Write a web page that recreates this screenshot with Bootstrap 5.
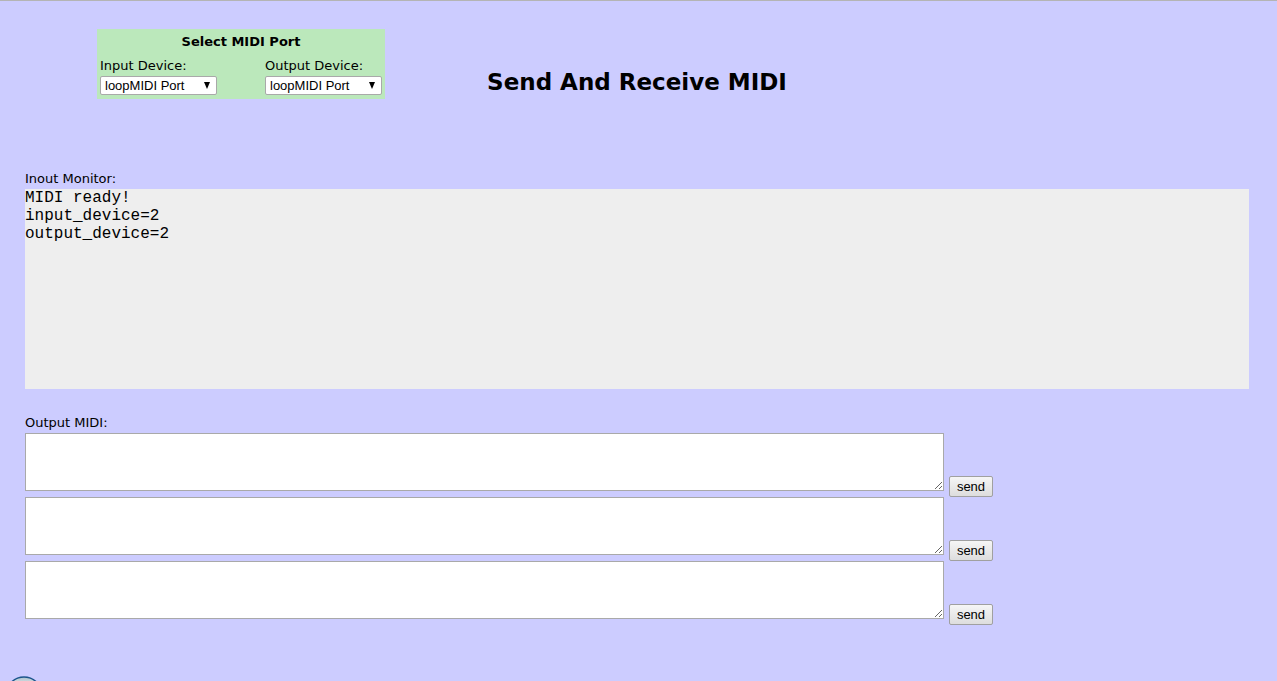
<!DOCTYPE html>
<html lang="en">
<head>
<meta charset="utf-8">
<meta name="viewport" content="width=device-width, initial-scale=1">
<title>Send And Receive MIDI</title>
<link href="https://cdn.jsdelivr.net/npm/bootstrap@5.3.0/dist/css/bootstrap.min.css" rel="stylesheet">
<style>
  body { background: #ccccff; color: #000; font: 13px/20px Verdana, "DejaVu Sans", sans-serif; }
  .page { border-top: 1px solid #b4b4b4; }
  .content { padding: 28px 28px 0 25px; }
  .masthead { display: grid; grid-template-columns: 1fr auto 1fr; margin-bottom: 70px; }
  .masthead h1 { font-size: 23px; line-height: 32px; font-weight: 700; margin: 37px 0 0; white-space: nowrap; }
  .ports { width: 288px; height: 70px; margin-left: 72px; padding: 3px 3px 0; background: #bbe8bb; }
  .ports h2 { font-size: 13px; line-height: 20px; font-weight: 700; margin: 0 0 4px; }
  .ports label { display: block; line-height: 20px; }
  .ports .picker { width: 117px; }
  .select-box { position: relative; }
  .select-box select { display: block; width: 117px; height: 19px; padding: 0 4px; appearance: none; border: 1px solid #a9a9a9; border-radius: 2px; background: #fff; color: #000; font: 13px/17px "Liberation Sans", sans-serif; }
  .select-box svg { position: absolute; right: 6px; top: 6px; pointer-events: none; }
  .monitor { height: 200px; margin: 0 0 24px; background: #eee; color: #000; font: 16px/18px "Liberation Mono", monospace; }
  .send-row { gap: 5px; }
  .send-row textarea { width: calc(75% + 1px); height: 58px; margin-bottom: 6px; padding: 2px; border: 1px solid #a9a9a9; background: #fff; resize: vertical; font: 16px/18px "Liberation Mono", monospace; }
  .send-row button { width: 44px; height: 21px; padding: 0; border: 1px solid #a0a0a0; border-radius: 2px; background: linear-gradient(#f6f6f6, #dddddd); color: #000; font: 13px/17px "Liberation Sans", sans-serif; }
  .peek { height: 5px; padding-left: 5px; }
</style>
</head>
<body>
<div class="page d-flex flex-column min-vh-100">
  <main class="content">
    <header class="masthead">
      <section class="ports">
        <h2 class="text-center">Select MIDI Port</h2>
        <div class="d-flex justify-content-between">
          <div class="picker">
            <label for="input-device">Input Device:</label>
            <div class="select-box">
              <select id="input-device"><option>loopMIDI Port</option></select>
              <svg width="8" height="7" viewBox="0 0 8 7" aria-hidden="true"><path d="M1 0h6L4 7z"/></svg>
            </div>
          </div>
          <div class="picker">
            <label for="output-device">Output Device:</label>
            <div class="select-box">
              <select id="output-device"><option>loopMIDI Port</option></select>
              <svg width="8" height="7" viewBox="0 0 8 7" aria-hidden="true"><path d="M1 0h6L4 7z"/></svg>
            </div>
          </div>
        </div>
      </section>
      <h1>Send And Receive MIDI</h1>
    </header>

    <div id="monitor-label">Inout Monitor:</div>
    <pre class="monitor" aria-labelledby="monitor-label">MIDI ready!
input_device=2
output_device=2</pre>

    <label class="d-block" for="message-1">Output MIDI:</label>
    <div class="send-row d-flex align-items-end">
      <textarea id="message-1"></textarea>
      <button type="button">send</button>
    </div>
    <div class="send-row d-flex align-items-end">
      <textarea id="message-2" aria-label="Output MIDI 2"></textarea>
      <button type="button">send</button>
    </div>
    <div class="send-row d-flex align-items-end">
      <textarea id="message-3" aria-label="Output MIDI 3"></textarea>
      <button type="button">send</button>
    </div>
  </main>
  <footer class="peek mt-auto overflow-hidden">
    <svg class="d-block" width="38" height="38" viewBox="0 0 38 38" aria-hidden="true">
      <defs><linearGradient id="rim" x1="0" y1="0" x2="0" y2="1"><stop offset="0" stop-color="#a9bfcb"/><stop offset=".15" stop-color="#d2dde2"/></linearGradient></defs>
      <circle cx="19" cy="19" r="18" fill="url(#rim)" stroke="#1d568c" stroke-width="1.5"/>
    </svg>
  </footer>
</div>
<script src="https://cdn.jsdelivr.net/npm/bootstrap@5.3.0/dist/js/bootstrap.bundle.min.js"></script>
</body>
</html>
